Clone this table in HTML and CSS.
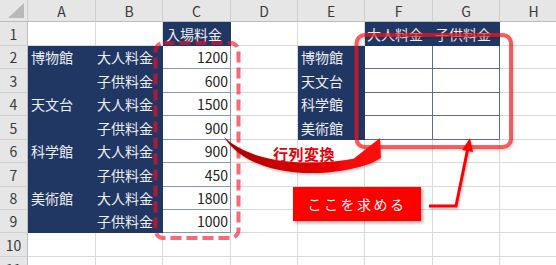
FILE: index.html
```html
<!DOCTYPE html>
<html lang="ja">
<head>
<meta charset="utf-8">
<link rel="stylesheet" href="styles.css">
</head>
<body>
<div class="sheet">
  <div class="c h corner"><span class="tri"></span></div>
  <div class="c h">A</div><div class="c h">B</div><div class="c h">C</div><div class="c h">D</div><div class="c h">E</div><div class="c h">F</div><div class="c h">G</div><div class="c h">H</div>

  <div class="c rh">1</div>
  <div class="c"></div><div class="c"></div><div class="c n">入場料金</div><div class="c"></div><div class="c"></div><div class="c n hf">大人料金</div><div class="c n hf">子供料金</div><div class="c"></div>

  <div class="c rh">2</div>
  <div class="c n">博物館</div><div class="c n r">大人料金</div><div class="c num">1200</div><div class="c"></div><div class="c n">博物館</div><div class="c bx"></div><div class="c bx"></div><div class="c"></div>

  <div class="c rh">3</div>
  <div class="c n"></div><div class="c n r">子供料金</div><div class="c num">600</div><div class="c"></div><div class="c n">天文台</div><div class="c bx"></div><div class="c bx"></div><div class="c"></div>

  <div class="c rh">4</div>
  <div class="c n">天文台</div><div class="c n r">大人料金</div><div class="c num">1500</div><div class="c"></div><div class="c n">科学館</div><div class="c bx"></div><div class="c bx"></div><div class="c"></div>

  <div class="c rh">5</div>
  <div class="c n"></div><div class="c n r">子供料金</div><div class="c num">900</div><div class="c"></div><div class="c n">美術館</div><div class="c bx"></div><div class="c bx"></div><div class="c"></div>

  <div class="c rh">6</div>
  <div class="c n">科学館</div><div class="c n r">大人料金</div><div class="c num">900</div><div class="c"></div><div class="c"></div><div class="c"></div><div class="c"></div><div class="c"></div>

  <div class="c rh">7</div>
  <div class="c n"></div><div class="c n r">子供料金</div><div class="c num">450</div><div class="c"></div><div class="c"></div><div class="c"></div><div class="c"></div><div class="c"></div>

  <div class="c rh">8</div>
  <div class="c n">美術館</div><div class="c n r">大人料金</div><div class="c num">1800</div><div class="c"></div><div class="c"></div><div class="c"></div><div class="c"></div><div class="c"></div>

  <div class="c rh">9</div>
  <div class="c n"></div><div class="c n r">子供料金</div><div class="c num">1000</div><div class="c"></div><div class="c"></div><div class="c"></div><div class="c"></div><div class="c"></div>

  <div class="c rh">10</div>
  <div class="c"></div><div class="c"></div><div class="c"></div><div class="c"></div><div class="c"></div><div class="c"></div><div class="c"></div><div class="c"></div>

  <div class="c rh">11</div>
  <div class="c"></div><div class="c"></div><div class="c"></div><div class="c"></div><div class="c"></div><div class="c"></div><div class="c"></div><div class="c"></div>
</div>

<svg class="overlay" width="556" height="265" viewBox="0 0 556 265">
  <defs>
    <linearGradient id="ag" x1="0" y1="0" x2="1" y2="0">
      <stop offset="0" stop-color="#a80000"/>
      <stop offset="0.55" stop-color="#e00000"/>
      <stop offset="1" stop-color="#ff1010"/>
    </linearGradient>
    <filter id="sh" x="-10%" y="-10%" width="130%" height="130%">
      <feDropShadow dx="1" dy="1.5" stdDeviation="1" flood-color="#000" flood-opacity="0.25"/>
    </filter>
  </defs>
  <rect x="155.5" y="43" width="83" height="195" rx="8" ry="8" fill="none" stroke="rgba(255,10,30,0.62)" stroke-width="4" stroke-dasharray="11 5"/>
  <rect x="356.5" y="35" width="154.5" height="112" rx="8" ry="8" fill="none" stroke="rgba(255,10,20,0.66)" stroke-width="4" filter="url(#sh)"/>
  <path d="M224,137 C250,162 305,168 358,158 L352,160 L380,138 L381,158 L372,163 C325,180 250,178 224,137 Z" fill="url(#ag)" filter="url(#sh)"/>
  <g filter="url(#sh)">
    <polyline points="429,206 456,206 467.5,150" fill="none" stroke="#ff0000" stroke-width="3" stroke-linejoin="miter"/>
    <polygon points="470,138 473,152 462,150" fill="#ff0000"/>
  </g>
</svg>

<div class="tag">行列変換</div>
<div class="callout">ここを求める</div>
</body>
</html>
```

FILE: styles.css
```css
body {
  margin: 0;
  width: 556px;
  height: 265px;
  overflow: hidden;
  position: relative;
  background: #ffffff;
  font-family: "Noto Sans CJK JP", "Noto Sans", sans-serif;
}

.sheet {
  display: grid;
  grid-template-columns: 28px 68px 67px 68px 67px 67px 68px 67px 68px;
  grid-template-rows: 22px 24px 23px 24px 23px 24px 23px 24px 23px 23px 24px 24px;
}

.c {
  box-sizing: border-box;
  border-right: 1px solid #dadada;
  border-bottom: 1px solid #dadada;
  display: flex;
  align-items: center;
  font-size: 14px;
  line-height: 1;
  white-space: nowrap;
  overflow: hidden;
  color: #222222;
}

.h {
  background: #e6e6e6;
  border-right-color: #cfcfcf;
  border-bottom-color: #bdbdbd;
  justify-content: center;
  color: #3a3a3a;
}

.corner {
  position: relative;
}

.tri {
  width: 0;
  height: 0;
  position: absolute;
  right: 3px;
  bottom: 3px;
  border-left: 16px solid transparent;
  border-bottom: 15px solid #b9b9b9;
}

.rh {
  background: #e6e6e6;
  border-right-color: #bdbdbd;
  border-bottom-color: #d0d0d0;
  justify-content: center;
  color: #3a3a3a;
}

.n {
  background: #203764;
  border-color: #203764;
  color: #eceef3;
  padding-left: 3px;
}

.hf {
  padding-left: 2px;
}

.r {
  justify-content: flex-end;
  padding-left: 0;
  padding-right: 9px;
}

.num {
  justify-content: flex-end;
  padding-right: 2px;
  border-right-color: #8597b1;
  border-bottom-color: #8597b1;
}

.bx {
  border-right-color: #5e6d8a;
  border-bottom-color: #5e6d8a;
}

.overlay {
  position: absolute;
  left: 0;
  top: 0;
}

.tag {
  position: absolute;
  left: 273px;
  top: 144px;
  font-size: 15px;
  line-height: 20px;
  font-weight: bold;
  color: #e6000a;
  letter-spacing: 0.5px;
}

.callout {
  position: absolute;
  left: 293px;
  top: 187px;
  width: 128px;
  height: 34px;
  background: #ff0000;
  color: #ffffff;
  display: flex;
  align-items: center;
  justify-content: center;
  font-size: 14px;
  letter-spacing: 2.5px;
  box-shadow: 2px 2px 3px rgba(0, 0, 0, 0.35);
}
```
